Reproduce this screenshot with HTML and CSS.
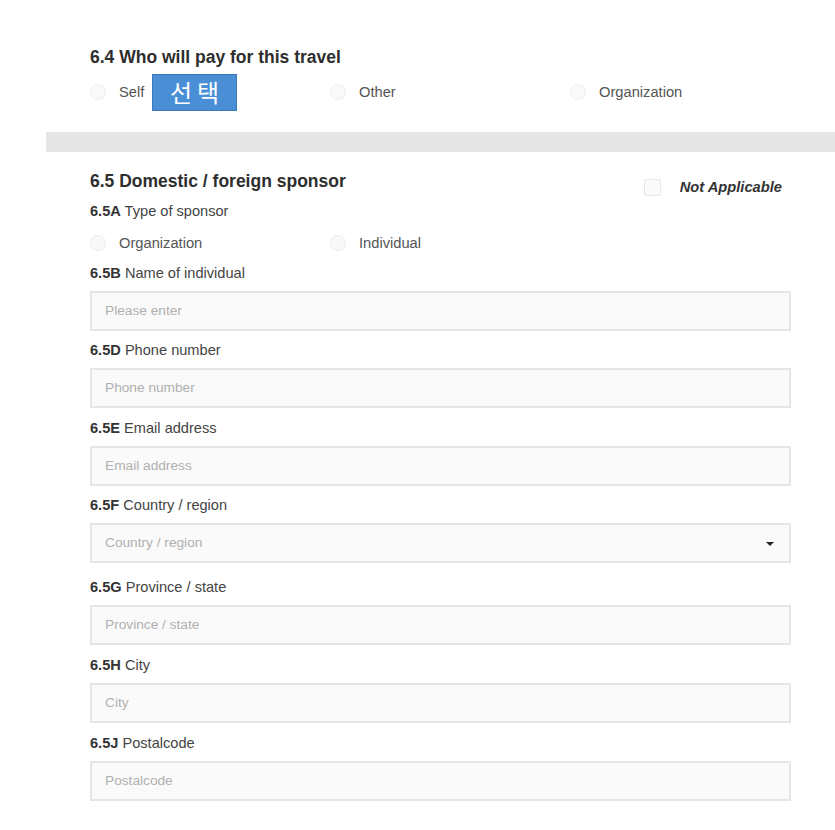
FILE: index.html
```html
<!DOCTYPE html>
<html lang="en">
<head>
  <meta charset="UTF-8" />
  <title>Sponsor</title>
  <link rel="stylesheet" href="styles.css">
</head>
<body>
  <section class="block">
    <h3 class="title">6.4 Who will pay for this travel</h3>
    <div class="radio-row">
      <label class="radio"><span class="dot"></span>Self</label>
      <label class="radio"><span class="dot"></span>Other</label>
      <label class="radio"><span class="dot"></span>Organization</label>
      <span class="badge">선택</span>
    </div>
  </section>

  <div class="divider"></div>

  <section class="block">
    <div class="title-row">
      <h3 class="title">6.5 Domestic / foreign sponsor</h3>
      <label class="na"><span class="box"></span>Not Applicable</label>
    </div>

    <div class="label first"><b>6.5A</b> Type of sponsor</div>
    <div class="radio-row small">
      <label class="radio"><span class="dot"></span>Organization</label>
      <label class="radio"><span class="dot"></span>Individual</label>
    </div>

    <div class="label tight"><b>6.5B</b> Name of individual</div>
    <div class="field">Please enter</div>

    <div class="label"><b>6.5D</b> Phone number</div>
    <div class="field">Phone number</div>

    <div class="label loose"><b>6.5E</b> Email address</div>
    <div class="field">Email address</div>

    <div class="label"><b>6.5F</b> Country / region</div>
    <div class="field select">Country / region<span class="caret"></span></div>

    <div class="label wide"><b>6.5G</b> Province / state</div>
    <div class="field">Province / state</div>

    <div class="label loose"><b>6.5H</b> City</div>
    <div class="field">City</div>

    <div class="label loose"><b>6.5J</b> Postalcode</div>
    <div class="field">Postalcode</div>
  </section>
</body>
</html>
```

FILE: styles.css
```css
:root {
  --text: #333;
  --muted: #555;
  --field-bg: #fafafa;
  --field-border: #e6e6e6;
  --font: "Liberation Sans", Arial, "Noto Sans CJK KR", sans-serif;
}

body {
  margin: 0;
  font-family: var(--font);
  background: #fff;
  color: var(--text);
}

.block {
  padding: 0 44px 0 90px;
}

.block:first-child {
  padding-top: 45px;
}

.title {
  margin: 0;
  font-size: 17.5px;
  line-height: 24px;
  font-weight: bold;
  color: #2e2e2e;
}

.radio-row {
  position: relative;
  display: flex;
  height: 24px;
  margin-top: 11px;
}

.radio-row.small {
  margin-top: 10px;
}

.radio {
  flex: 0 0 240px;
  display: flex;
  align-items: center;
  gap: 13px;
  font-size: 14.7px;
  color: var(--muted);
}

.dot {
  width: 14px;
  height: 14px;
  border: 1px solid #ececec;
  border-radius: 50%;
  background: #f9f9f9;
}

.badge {
  position: absolute;
  left: 62px;
  top: -6px;
  width: 85px;
  height: 37px;
  box-sizing: border-box;
  background: #4a8fd6;
  border: 1px solid #3d78b8;
  color: #fff;
  font-family: "Noto Sans CJK KR", sans-serif;
  font-size: 24px;
  line-height: 34px;
  letter-spacing: 5px;
  text-indent: 5px;
  text-align: center;
}

.divider {
  height: 20px;
  margin: 28px 0 17px 46px;
  background: #e6e6e6;
}

.title-row {
  display: flex;
  justify-content: space-between;
  align-items: flex-start;
}

.na {
  display: flex;
  align-items: center;
  gap: 19px;
  height: 20px;
  margin-top: 8px;
  padding-right: 9px;
  font-size: 14.7px;
  font-weight: bold;
  font-style: italic;
  color: #333;
}

.box {
  width: 15px;
  height: 15px;
  border: 1px solid #e8e8e8;
  border-radius: 2px;
  background: #fafafa;
}

.label {
  font-size: 14.6px;
  line-height: 20px;
  color: #444;
  padding: 9px 0 8px;
}

.label b {
  color: #333;
}

.label.first {
  padding: 4px 0 0;
}

.label.tight {
  padding: 8px 0 8px;
}

.label.loose {
  padding: 10px 0 8px;
}

.label.wide {
  padding: 14px 0 8px;
}

.field {
  position: relative;
  height: 40px;
  box-sizing: border-box;
  border: 2px solid var(--field-border);
  background: var(--field-bg);
  padding: 0 13px;
  font-size: 13.7px;
  line-height: 36px;
  color: #b0b0b0;
}

.caret {
  position: absolute;
  right: 15px;
  top: 17px;
  border-left: 4px solid transparent;
  border-right: 4px solid transparent;
  border-top: 4px solid #222;
}
```
